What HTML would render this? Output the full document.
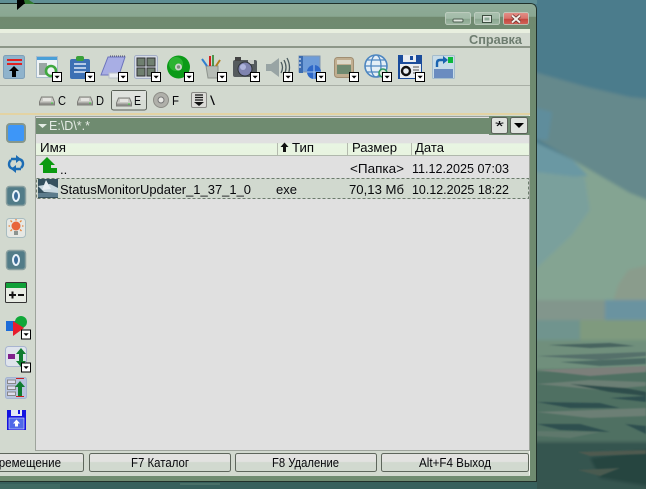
<!DOCTYPE html>
<html><head><meta charset="utf-8">
<style>
html,body{margin:0;padding:0;background:#3a5f5c;width:646px;height:489px;overflow:hidden}
svg{display:block}
text{font-family:"Liberation Sans",sans-serif;font-size:13px;fill:#08080c}
</style></head>
<body>
<svg width="646" height="489" viewBox="0 0 646 489" xmlns="http://www.w3.org/2000/svg">
<defs>
<filter id="bl" x="-5%" y="-5%" width="110%" height="110%"><feGaussianBlur stdDeviation="1.6"/></filter>
<filter id="bl2" x="-5%" y="-5%" width="110%" height="110%"><feGaussianBlur stdDeviation=".7"/></filter>
<linearGradient id="title" x1="0" y1="0" x2="0" y2="1"><stop offset="0" stop-color="#8fab98"/><stop offset=".5" stop-color="#8aa792"/><stop offset=".52" stop-color="#70896f"/><stop offset="1" stop-color="#6f8a70"/></linearGradient>
<linearGradient id="hdr" x1="0" y1="0" x2="0" y2="1"><stop offset="0" stop-color="#e0e0e0"/><stop offset=".2" stop-color="#e0e0e0"/><stop offset=".25" stop-color="#e8f5e2"/><stop offset="1" stop-color="#e8f4e0"/></linearGradient>
<linearGradient id="btn" x1="0" y1="0" x2="0" y2="1"><stop offset="0" stop-color="#e2e2e0"/><stop offset=".45" stop-color="#e2e2e0"/><stop offset=".5" stop-color="#d1d9cf"/><stop offset="1" stop-color="#d1d9cf"/></linearGradient>
<linearGradient id="wb" x1="0" y1="0" x2="0" y2="1"><stop offset="0" stop-color="#a9c0ae"/><stop offset=".5" stop-color="#a2bba8"/><stop offset=".55" stop-color="#8aa68f"/><stop offset="1" stop-color="#9db6a2"/></linearGradient>
<linearGradient id="wr" x1="0" y1="0" x2="0" y2="1"><stop offset="0" stop-color="#e39088"/><stop offset=".5" stop-color="#d9736b"/><stop offset=".55" stop-color="#c4473f"/><stop offset="1" stop-color="#d0645a"/></linearGradient>
<g id="dd"><rect x="0" y="0" width="9" height="9" fill="#fff" stroke="#000"/><path d="M2 3.2h5.2l-2.600 2.800z" fill="#000"/></g>
<g id="drv"><path d="M2.500 1.500h11l2 5v3H.5v-3z" fill="#c9c9c4" stroke="#7e7e7a"/><rect x="4" y="2.500" width="8" height="3" fill="#e4e4e0"/><rect x="1" y="7" width="14" height="2" fill="#93938f"/><rect x="12" y="7" width="2" height="1" fill="#3c3"/></g>
</defs>

<!-- wallpaper -->
<g filter="url(#bl)">
<rect x="520" y="-10" width="140" height="520" fill="#4c7c8c"/>
<path d="M520 68 L587 87 L630 97 L660 100 V210 L630 193 L573 160 L530 135 L520 130Z" fill="#65898c"/>
<path d="M520 104 L552 112 L548 140 L520 138Z" fill="#5f8d9c"/>
<path d="M520 135 L573 160 L630 193 L660 205 V305 H520Z" fill="#84a492"/>
<path d="M520 135 L573 160 L588 176 L560 178 L520 172Z" fill="#6b98a3"/>
<path d="M520 170 L585 178 L590 210 L572 235 L537 268 L520 270Z" fill="#7aa09c"/>
<path d="M618 285 L628 270 L660 262 V305 H612Z" fill="#8a9c8c"/>
<rect x="520" y="300" width="140" height="40" fill="#70948e"/>
<rect x="520" y="300" width="85" height="20" fill="#82968c"/>
<rect x="605" y="300" width="55" height="20" fill="#6b93a0"/>
<rect x="580" y="320" width="80" height="22" fill="#7f9a7e"/>
<rect x="520" y="340" width="140" height="30" fill="#6f8f7c"/>
<rect x="520" y="370" width="140" height="72" fill="#506f62"/>
<rect x="520" y="442" width="140" height="60" fill="#34544f"/>
<path d="M590 458 L660 448 V488 L600 478Z" fill="#264441"/>
</g>
<g filter="url(#bl2)">
<path d="M548 345 L610 343 L635 346 L590 348Z" fill="#46635f"/>
<path d="M537 356 L646 352 V356 L600 360Z" fill="#55706a"/>
<path d="M560 362 L646 358 V364 L600 366Z" fill="#4c6a64"/>
<path d="M537 370 L646 366 V372 L590 376Z" fill="#7b7f7a"/>
<path d="M537 384 L590 380 L646 382 V386 L600 390Z" fill="#6c7f74"/>
<path d="M570 384 L625 388 L646 392 V396 L610 392Z" fill="#2d4d4b"/>
<path d="M537 402 L600 403 L620 408 L570 408Z" fill="#2f5050"/>
<path d="M610 398 L646 396 V402Z" fill="#2f5050"/>
<path d="M537 412 L646 408 V416 L590 418Z" fill="#6c7f74"/>
<path d="M537 424 L580 424 L610 432 L560 430Z" fill="#2f5050"/>
<path d="M625 424 L646 426 V434Z" fill="#2f5050"/>
<path d="M537 431 L600 432 L570 438 L537 436Z" fill="#5e786c"/>
<path d="M578 452 L646 450 V454 L590 456Z" fill="#4f5a50"/>
<path d="M578 470 L620 468 L600 476Z" fill="#4a5a50"/>
</g>

<!-- top strip & bottom strip -->
<rect x="0" y="0" width="537" height="4" fill="#5f8e94"/>
<rect x="0" y="482" width="537" height="7" fill="#37605c"/>
<rect x="0" y="484" width="60" height="5" fill="#3f6a62"/>
<rect x="180" y="483" width="40" height="2" fill="#4a7068"/>

<!-- window -->
<path d="M0 3.500H530Q536.500 3.500 536.500 10V481.500H0Z" fill="#6f8b70" stroke="#20302a"/>
<path d="M0 4H530Q536 4 536 10V29H0Z" fill="url(#title)"/>
<rect x="530" y="29" width="6" height="452" fill="#6f8b70"/>
<rect x="0" y="29" width="530" height="447" fill="#d2d9cf"/>
<rect x="0" y="29" width="530" height="4" fill="#e8efdf"/>
<rect x="0" y="46" width="530" height="2" fill="#8c9688"/>
<rect x="0" y="85" width="530" height="1" fill="#a9afa6"/>
<rect x="0" y="113" width="530" height="2" fill="#e3d3a3"/>
<rect x="529" y="115" width="1" height="360" fill="#f0f2ec"/>
<rect x="0" y="476" width="530" height="6" fill="#6f8b70"/>
<rect x="0" y="481" width="537" height="1" fill="#20302a"/>

<!-- cursor -->
<path d="M17 0V10L24 4H35L28 0Z" fill="#000"/><path d="M24 0H29L35 4H25Z" fill="#2f7a2f"/>

<!-- window buttons -->
<rect x="445.500" y="12.500" width="25" height="12" rx="2" fill="url(#wb)" stroke="#c8d4c8" stroke-width=".8"/>
<rect x="453" y="19" width="10" height="3" rx="1" fill="#dfe6df" stroke="#4d5d50"/>
<rect x="474.500" y="12.500" width="25" height="12" rx="2" fill="url(#wb)" stroke="#c8d4c8" stroke-width=".8"/>
<rect x="482.500" y="15.500" width="9" height="7" fill="#dfe6df" stroke="#3d4d40"/><rect x="484.500" y="17.500" width="5" height="3" fill="#8fab98"/>
<rect x="503.500" y="12.500" width="25" height="12" rx="2" fill="url(#wr)" stroke="#c8d4c8" stroke-width=".8"/>
<path d="M512 15.500L520 22.500M520 15.500L512 22.500" stroke="#5a2a25" stroke-width="3.400"/>
<path d="M512 15.500L520 22.500M520 15.500L512 22.500" stroke="#f4f0ea" stroke-width="2"/>

<text x="469" y="44" textLength="53" lengthAdjust="spacingAndGlyphs" style="font-weight:bold;fill:#6e7d70">Справка</text>

<!-- toolbar icons -->
<g>
<rect x="3.500" y="55.500" width="21" height="23" rx="2" fill="#8fb3cc" stroke="#7e9fb8"/>
<rect x="7" y="59" width="15" height="2" fill="#e02020"/><rect x="7" y="63" width="15" height="2" fill="#e02020"/>
<path d="M14 66l5 5h-3v6h-4v-6h-3z" fill="#000"/>

<rect x="36.500" y="56.500" width="21" height="21" fill="#eef2f5" stroke="#a9bccb"/><rect x="37" y="57" width="20" height="3" fill="#4aa0d8"/>
<rect x="39" y="63" width="8" height="12" fill="#9aa6a4"/>
<circle cx="51" cy="71" r="5" fill="none" stroke="#3fa83f" stroke-width="2.600"/>

<rect x="70" y="59" width="20" height="20" rx="2" fill="#3c70b4"/><rect x="76" y="56" width="8" height="5" rx="2" fill="#3aa03a"/>
<path d="M74 64h12M74 68h12M74 72h12" stroke="#dce8f8" stroke-width="1.600"/>

<path d="M108 57h17l-6 18h-18z" fill="#a8aee4" stroke="#6c74bc"/><path d="M110 56h15" stroke="#556" stroke-dasharray="1 1"/>
<rect x="109" y="73" width="14" height="5" fill="#e8ecf0" stroke="#b8bec8"/>

<rect x="134.500" y="55.500" width="23" height="23" rx="2" fill="#d5dbe6" stroke="#a4aec6"/>
<rect x="137" y="58" width="8" height="8" fill="#6f7f70" stroke="#333"/><rect x="147" y="58" width="8" height="8" fill="#6f7f70" stroke="#333"/>
<rect x="137" y="68" width="8" height="8" fill="#6f7f70" stroke="#333"/><rect x="147" y="68" width="8" height="8" fill="#6f7f70" stroke="#333"/>

<circle cx="178.500" cy="67" r="11.500" fill="#0b9a18"/><circle cx="176" cy="64" r="7" fill="#42c444" opacity=".6"/><circle cx="178.500" cy="67" r="3.500" fill="#cfd6cf"/><circle cx="178.500" cy="67" r="1.700" fill="#7c8c7c"/>

<path d="M206 66h12v12h-10z" fill="#b6bcb6" stroke="#8d938d"/>
<path d="M207 66L202 59" stroke="#2f7fd0" stroke-width="2"/><path d="M210 66V56" stroke="#d02020" stroke-width="2"/><path d="M213 66V55" stroke="#208020" stroke-width="1.500"/><path d="M216 66L220 60" stroke="#b08020" stroke-width="2"/>

<rect x="233" y="60" width="24" height="17" rx="2" fill="#555b5e"/><rect x="235" y="57" width="6" height="4" fill="#444"/><rect x="248" y="60" width="6" height="4" fill="#c8ccc8"/>
<circle cx="245" cy="69" r="7" fill="#7f84b0" stroke="#2e3338"/><circle cx="243" cy="67" r="3" fill="#aeb4dc"/>

<path d="M266 64h5l8-6v19l-8-6h-5z" fill="#98a4a4"/>
<path d="M281 62q3 5.500 0 11M284 60q4 7.500 0 15M287 58q5 9.500 0 19" fill="none" stroke="#4a5a5e" stroke-width="1.300"/>

<rect x="299" y="56" width="21" height="16" fill="#6e9cd8" stroke="#8298b0"/><rect x="299" y="56" width="4" height="17" fill="#3c6cb0"/><path d="M300 58v12" stroke="#fff" stroke-dasharray="2 2"/>
<circle cx="314" cy="72" r="7" fill="#2e68c8"/><path d="M307 72h14M314 65v14" stroke="#a8c8f0"/>

<rect x="334.500" y="57.500" width="19" height="20" rx="3" fill="#c0ae90" stroke="#a08e72"/><rect x="337" y="60" width="14" height="4" fill="#dcd8c8"/><rect x="337" y="65" width="14" height="9" fill="#6f8a70"/>

<circle cx="376" cy="66" r="11" fill="#e4eef6" stroke="#4d86c0" stroke-width="1.600"/>
<ellipse cx="376" cy="66" rx="5" ry="11" fill="none" stroke="#4d86c0" stroke-width="1.300"/><path d="M365 66h22M367 60h18M367 72h18" stroke="#4d86c0" stroke-width="1.200"/>
<circle cx="383" cy="73" r="4" fill="#d8e4d8" stroke="#2f9a5f" stroke-width="1.600"/>

<path d="M398 55h24v24h-24z" fill="#1a4c9c"/><rect x="403" y="55" width="13" height="7" fill="#e8ecf0"/><rect x="410" y="56" width="3" height="4" fill="#1a4c9c"/>
<rect x="400" y="64" width="21" height="14" fill="#e8ecf0"/><circle cx="406" cy="71" r="4" fill="none" stroke="#111" stroke-width="2.400"/><path d="M413 67h6M413 70h6M413 73h4" stroke="#555"/>

<rect x="432.500" y="55.500" width="22" height="23" rx="1" fill="#c8dce8" stroke="#a4bccc"/><rect x="448" y="57" width="5" height="6" fill="#0cb83c"/>
<rect x="434" y="69" width="19" height="9" fill="#6a8cc0"/>
<path d="M437 67v-4q0-3 3-3h4" fill="none" stroke="#1a64b0" stroke-width="2.400"/><path d="M443 56l5 4-5 4z" fill="#1a64b0"/>
</g>
<use href="#dd" x="52.500" y="72.500"/><use href="#dd" x="85.500" y="72.500"/><use href="#dd" x="118.500" y="72.500"/><use href="#dd" x="151.500" y="72.500"/><use href="#dd" x="184.500" y="72.500"/><use href="#dd" x="217.500" y="72.500"/><use href="#dd" x="250.500" y="72.500"/><use href="#dd" x="283.500" y="72.500"/><use href="#dd" x="316.500" y="72.500"/><use href="#dd" x="349.500" y="72.500"/><use href="#dd" x="382.500" y="72.500"/><use href="#dd" x="415.500" y="72.500"/>

<!-- drives -->
<rect x="111.500" y="90.500" width="35" height="19.500" rx="2" fill="#d6dcd4" stroke="#5a6058"/>
<rect x="112" y="91" width="34" height="9" fill="#dfe2de"/>
<use href="#drv" x="39" y="95.500"/><text x="58" y="105" textLength="8" lengthAdjust="spacingAndGlyphs">C</text>
<use href="#drv" x="77" y="95.500"/><text x="96" y="105" textLength="8" lengthAdjust="spacingAndGlyphs">D</text>
<use href="#drv" x="116" y="96.500"/><text x="134" y="105" textLength="7" lengthAdjust="spacingAndGlyphs">E</text>
<circle cx="161" cy="100" r="7.500" fill="#b0b0aa" stroke="#8c8c86"/><circle cx="161" cy="100" r="3" fill="#e8e8e4" stroke="#777"/>
<text x="172" y="105" textLength="7" lengthAdjust="spacingAndGlyphs">F</text>
<rect x="191.500" y="92.500" width="15" height="15" rx="1.500" fill="#dcdcd8" stroke="#8a8a86"/><path d="M195 95h8M195 97.500h8M195 100h8" stroke="#111" stroke-width="1.300"/><path d="M194 102h10l-5 4z" fill="#111"/>
<text x="210" y="105" textLength="5" lengthAdjust="spacingAndGlyphs">\</text>

<!-- sidebar icons -->
<rect x="7" y="124" width="18" height="18" rx="3" fill="#3d96f8" stroke="#86978c" stroke-width="2"/>
<g fill="none" stroke="#1c6cb4" stroke-width="2.400"><path d="M11 159h6q6 0 6 5 0 2-2 4"/><path d="M21 169h-6q-6 0-6-5 0-2 2-4"/></g>
<path d="M16 155l5 4-5 4zM16 165l-5 4 5 4z" fill="#1c6cb4"/>
<g id="z"><rect x="6.500" y="186.500" width="19" height="19" rx="3" fill="#527c88" stroke="#8aa0a0" stroke-width="1.500"/><ellipse cx="16" cy="196" rx="3" ry="5" fill="#3c6c98" stroke="#e8f2fa" stroke-width="2"/></g>
<use href="#z" y="64"/>
<rect x="6.500" y="218.500" width="19" height="19" rx="3" fill="#e6e8e4" stroke="#a8bcc0"/>
<circle cx="16" cy="226" r="4.500" fill="#e8663c"/><rect x="14" y="231" width="4" height="4" fill="#8c9490"/>
<path d="M16 219v1.500M8.500 226H10M22 226h1.500M10.500 220.500l1.500 1.500M21.500 220.500l-1.500 1.500M10.500 231l1.500-1.500M21.500 231l-1.500-1.500" stroke="#e8863c" stroke-width="1.300"/>
<rect x="5.500" y="282.500" width="21" height="20" rx="1" fill="#e8ece4" stroke="#333"/><rect x="6" y="283" width="20" height="5" fill="#10a038"/>
<path d="M9 295h7M12.500 291.500v7M18 295h6" stroke="#111" stroke-width="2"/>
<rect x="6" y="321" width="10" height="10" fill="#1c6cd8"/><circle cx="21" cy="322" r="6" fill="#10a838"/><path d="M13 321l11 7-11 8z" fill="#e81c2c"/>
<use href="#dd" x="21.500" y="330"/>
<rect x="5.500" y="346.500" width="21" height="20" rx="3" fill="#dfe4ec" stroke="#a8b4d0"/><rect x="8" y="354" width="7" height="5" fill="#80208c"/>
<path d="M21 348l5 6h-3v7h3l-5 6-5-6h3v-7h-3z" fill="#0f7c30"/>
<use href="#dd" x="21.500" y="363"/>
<rect x="5.500" y="377.500" width="21" height="21" rx="2" fill="#b8c4de" stroke="#a4b4d0"/>
<rect x="7.500" y="380" width="8" height="3.500" fill="#dde" stroke="#888"/><rect x="7.500" y="386" width="8" height="3.500" fill="#dde" stroke="#888"/><rect x="7.500" y="392" width="8" height="3.500" fill="#dde" stroke="#888"/>
<path d="M16 378.500h8M16 396.500h8" stroke="#c82020"/><path d="M20 381l5 6h-3v9h-4v-9h-3z" fill="#0f7c30"/>
<path d="M7 410h19v20H7z" fill="#1414e0"/><rect x="11" y="410" width="11" height="6" fill="#e4e8f4"/><rect x="18" y="410" width="2" height="4" fill="#1414e0"/><rect x="9" y="418" width="15" height="11" fill="#5068e8" stroke="#e0e4f8" stroke-width=".6"/><path d="M16.500 419.500l3.500 4h-2v3h-3v-3h-2z" fill="#fff"/>

<!-- panel -->
<rect x="35.500" y="116.500" width="494" height="334" fill="#e0e0e0" stroke="#9ea49c"/>
<rect x="36" y="118" width="493" height="16" fill="#6f8b70"/>
<rect x="489" y="116" width="41" height="19" fill="#6f8b70"/>
<rect x="491.500" y="117.500" width="16" height="16" rx="2" fill="#dfe2de" stroke="#5a6058"/><text x="495" y="131" style="font-size:15px" textLength="9" lengthAdjust="spacingAndGlyphs">*</text>
<rect x="510.500" y="117.500" width="17" height="16" rx="2" fill="#dfe2de" stroke="#5a6058"/><path d="M514 123h10l-5 5z" fill="#000"/>
<path d="M38 124h9l-4.500 4z" fill="#e4ece4"/>
<text x="49" y="130" textLength="41" lengthAdjust="spacingAndGlyphs" style="fill:#e6ece6">E:\D\*.*</text>

<rect x="36" y="140" width="493" height="15" fill="url(#hdr)"/>
<rect x="36" y="155" width="493" height="1" fill="#b0b8ac"/>
<path d="M277.500 143v12M347.500 143v12M411.500 143v12" stroke="#b4baae"/>
<text x="40" y="152" textLength="26" lengthAdjust="spacingAndGlyphs">Имя</text>
<path d="M284.500 142.500l4 4.500h-2.500v5h-3v-5h-2.500z" fill="#111"/>
<text x="292" y="152" textLength="22" lengthAdjust="spacingAndGlyphs">Тип</text>
<text x="352" y="152" textLength="45" lengthAdjust="spacingAndGlyphs">Размер</text>
<text x="415" y="152" textLength="29" lengthAdjust="spacingAndGlyphs">Дата</text>

<path d="M47 157L55 165H51V168H57V173H43V165H39Z" fill="#0c9a10"/>
<text x="60" y="174">..</text>
<text x="350" y="173" textLength="54" lengthAdjust="spacingAndGlyphs">&lt;Папка&gt;</text>
<text x="412" y="173" textLength="97" lengthAdjust="spacingAndGlyphs">11.12.2025 07:03</text>

<rect x="36.500" y="178.500" width="492" height="20" fill="#d1d9cf" stroke="#6c7c6c" stroke-dasharray="3 2"/>
<rect x="38" y="179" width="20" height="19" fill="#34505e"/>
<path d="M38 186l12-2 8 4v5L44 192z" fill="#c8d8e0"/><path d="M46 180l5 9-9 1z" fill="#e8eef2"/><rect x="38" y="193" width="20" height="4" fill="#5c7c8c"/>
<text x="60" y="194" textLength="191" lengthAdjust="spacingAndGlyphs">StatusMonitorUpdater_1_37_1_0</text>
<text x="276" y="194" textLength="21" lengthAdjust="spacingAndGlyphs">exe</text>
<text x="349" y="194" textLength="55" lengthAdjust="spacingAndGlyphs">70,13 Мб</text>
<text x="412" y="194" textLength="97" lengthAdjust="spacingAndGlyphs">10.12.2025 18:22</text>

<!-- bottom buttons -->
<g fill="url(#btn)" stroke="#5e665c">
<rect x="-6.500" y="453.500" width="90" height="18" rx="2"/>
<rect x="89.500" y="453.500" width="141" height="18" rx="2"/>
<rect x="235.500" y="453.500" width="141" height="18" rx="2"/>
<rect x="381.500" y="453.500" width="147" height="18" rx="2"/>
</g>
<text x="-16" y="467" textLength="77" lengthAdjust="spacingAndGlyphs">Перемещение</text>
<text x="131" y="467" textLength="58" lengthAdjust="spacingAndGlyphs">F7 Каталог</text>
<text x="272" y="467" textLength="67" lengthAdjust="spacingAndGlyphs">F8 Удаление</text>
<text x="419" y="467" textLength="72" lengthAdjust="spacingAndGlyphs">Alt+F4 Выход</text>
</svg>
</body></html>
